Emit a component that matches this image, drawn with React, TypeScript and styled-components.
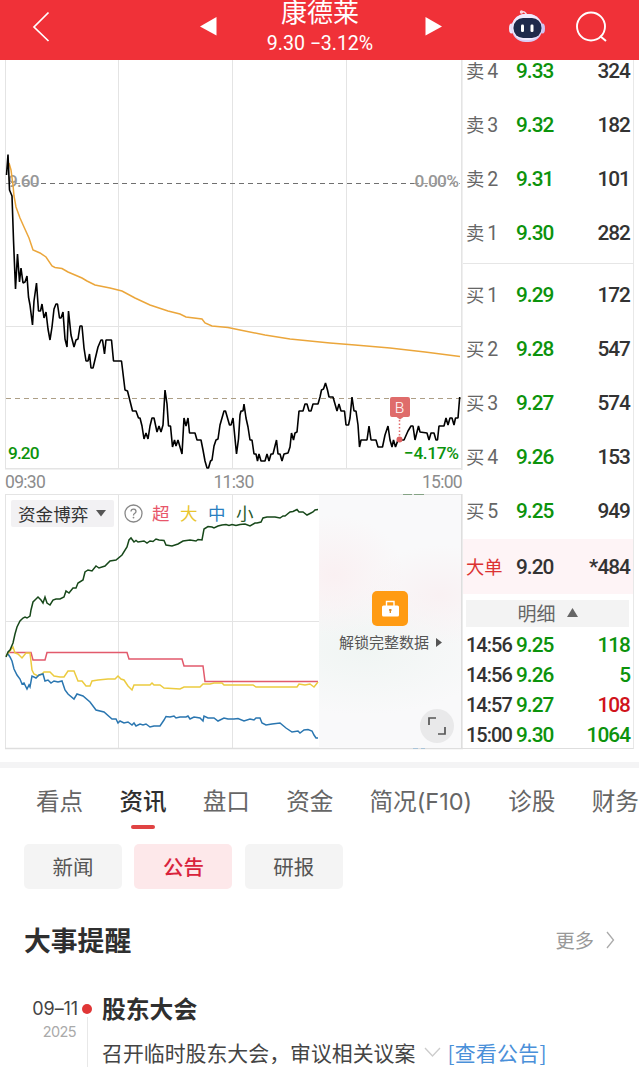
import React from "react";
import styled, { createGlobalStyle } from "styled-components";

const GlobalStyle = createGlobalStyle`
  * { box-sizing: border-box; }
  html, body { margin: 0; padding: 0; background: #fff; }
  body { overflow: hidden; font-family: "Noto Sans CJK SC", sans-serif; color: #333; }
  svg { display: block; }
`;

const GREEN = "#0c930c";
const RED = "#d0131b";
const INK = "#333333";
const digits = `font-family: Roboto, "Noto Sans CJK SC", sans-serif;`;

const Page = styled.div`
  width: 639px;
  height: 1067px;
  overflow: hidden;
  display: flex;
  flex-direction: column;
`;

/* ---------- header ---------- */
const Header = styled.header`
  flex: none;
  height: 60px;
  padding-left: 32px;
  background: #f03138;
  display: flex;
  color: #fff;
`;
const HeaderIcon = styled.svg<{ $left?: number; $top: number }>`
  flex: none;
  margin-left: ${(p) => p.$left ?? 0}px;
  margin-top: ${(p) => p.$top}px;
`;
const TitleBlock = styled.div`
  width: 206px;
  margin-right: 2px;
  display: flex;
  flex-direction: column;
  align-items: center;
`;
const StockName = styled.div`
  height: 22px;
  font-size: 26px;
  line-height: 22px;
`;
const StockQuote = styled.div`
  ${digits}
  margin-top: 10px;
  font-size: 19.6px;
  line-height: 24px;
  letter-spacing: -0.05px;
  white-space: nowrap;
`;

/* ---------- market area ---------- */
const Market = styled.section`
  flex: none;
  height: 690px;
  display: flex;
`;
const ChartColumn = styled.div`
  width: 463px;
  display: flex;
  flex-direction: column;
`;
const TimeAxis = styled.div`
  ${digits}
  height: 24px;
  padding: 0 1px 0 5px;
  display: flex;
  justify-content: space-between;
  font-size: 17.5px;
  line-height: 24px;
  letter-spacing: -0.7px;
  color: #8c8c8c;
`;
const FundChart = styled.div`
  position: relative;
  height: 256px;
`;
const Legend = styled.div`
  position: absolute;
  left: 11px;
  top: 6px;
  height: 27px;
  display: flex;
  align-items: center;
`;
const Picker = styled.div`
  width: 103px;
  height: 27px;
  padding-left: 7px;
  background: #f2f1f3;
  border-radius: 2px;
  display: flex;
  align-items: center;
  gap: 8px;
  font-size: 17.6px;
  line-height: 25px;
  padding-bottom: 1px;
  color: #333;
`;
const HelpIcon = styled.svg`
  margin: 0 9px 0 10px;
`;
const LegendItem = styled.span<{ $color: string }>`
  width: 28px;
  font-size: 17.5px;
  line-height: 25px;
  padding-bottom: 2px;
  color: ${(p) => p.$color};
`;
const LockPanel = styled.div`
  position: absolute;
  left: 319px;
  top: 1px;
  width: 142px;
  height: 253px;
  padding-top: 96px;
  display: flex;
  flex-direction: column;
  align-items: center;
  background:
    radial-gradient(ellipse 70px 60px at 15px 80px, #faf0f2 0%, rgba(250, 240, 242, 0) 100%),
    radial-gradient(ellipse 75px 50px at 120px 100px, #f9f1f3 0%, rgba(249, 241, 243, 0) 100%),
    radial-gradient(ellipse 130px 65px at 45px 155px, #f0f5f3 0%, rgba(240, 245, 243, 0) 100%),
    #f9f9fa;
`;
const LockLabel = styled.div`
  margin-top: 4px;
  padding-left: 1px;
  display: flex;
  align-items: center;
  gap: 7px;
  font-size: 15px;
  line-height: 24px;
  color: #555;
`;
const ExpandButton = styled.div`
  position: absolute;
  right: 7px;
  bottom: 5px;
  width: 34px;
  height: 34px;
  border-radius: 50%;
  background: #e9e9ea;
  display: grid;
  place-items: center;
`;

/* ---------- order book ---------- */
const OrderBook = styled.div`
  width: 171px;
  height: 689px;
  border-right: 1px solid #e8e8e8;
  border-bottom: 1px solid #dedede;
  display: flex;
  flex-direction: column;
`;
const SellSide = styled.div`
  flex: none;
  height: 204px;
  padding-bottom: 3px;
  border-bottom: 1px solid #e6e6e6;
  display: flex;
  flex-direction: column;
  justify-content: flex-end;
`;
const BuySide = styled.div`
  flex: none;
  height: 275px;
  padding-top: 4px;
`;
const BookRow = styled.div<{ $height: number; $tint?: string }>`
  ${digits}
  flex: none;
  height: ${(p) => p.$height}px;
  padding: ${(p) => (p.$tint ? "1px 3px 0" : "0 3px 1px")};
  background: ${(p) => p.$tint ?? "transparent"};
  display: grid;
  grid-template-columns: 50px 50px 1fr;
  align-items: center;
  font-size: 20.8px;
  font-weight: 500;
  line-height: 20px;
  letter-spacing: -0.95px;
`;
const PartialRow = styled(BookRow)`
  height: 37px;
  padding-bottom: 18px;
`;
const Level = styled.span<{ $color?: string }>`
  height: 20px;
  font-size: 18.3px;
  font-weight: 400;
  line-height: 22px;
  letter-spacing: 0;
  color: ${(p) => p.$color ?? "#666"};
`;
const LevelNumber = styled.span`
  margin-left: 3px;
  font-size: 19.5px;
`;
const Clock = styled.span`
  color: ${INK};
  font-size: 20px;
  letter-spacing: -1px;
`;
const Price = styled.span<{ $color: string }>`
  color: ${(p) => p.$color};
`;
const Volume = styled.span<{ $color: string }>`
  text-align: right;
  color: ${(p) => p.$color};
`;
const DetailBar = styled.div`
  flex: none;
  height: 27px;
  margin: 6px 4px 3px 3px;
  background: #f3f3f3;
  display: flex;
  align-items: center;
  justify-content: center;
  gap: 11px;
  font-size: 19px;
  line-height: 25px;
  padding-bottom: 2px;
  color: #666;
`;

/* ---------- news area ---------- */
const Divider = styled.div`
  flex: none;
  height: 6px;
  margin-top: 12px;
  background: #f4f4f5;
`;
const Tabs = styled.nav`
  flex: none;
  height: 76px;
  padding: 14px 0 0 36px;
  display: flex;
  gap: 36.2px;
  width: 700px;
`;
const Tab = styled.div<{ $active?: boolean }>`
  flex: none;
  display: flex;
  flex-direction: column;
  align-items: center;
  font-size: 23.6px;
  line-height: 36px;
  white-space: nowrap;
  font-weight: ${(p) => (p.$active ? 500 : 400)};
  color: ${(p) => (p.$active ? "#2f2f2f" : "#666")};
  &::after {
    content: "";
    width: 24px;
    height: 4px;
    margin-top: 7px;
    border-radius: 2px;
    background: ${(p) => (p.$active ? "#e04343" : "transparent")};
  }
`;
const TabCode = styled.span`
  font-family: Inter, sans-serif;
  font-size: 23.5px;
`;
const TabLabel = styled.div``;
const Chips = styled.div`
  flex: none;
  padding-left: 24px;
  display: flex;
  gap: 12.4px;
`;
const Chip = styled.div<{ $active?: boolean }>`
  width: 98px;
  height: 45px;
  border-radius: 5px;
  text-align: center;
  font-size: 20.5px;
  line-height: 45px;
  font-weight: ${(p) => (p.$active ? 500 : 400)};
  color: ${(p) => (p.$active ? "#d9233c" : "#555")};
  background: ${(p) => (p.$active ? "#fde8ea" : "#f4f4f4")};
`;
const SectionHead = styled.div`
  flex: none;
  height: 40px;
  margin-top: 31px;
  padding: 0 24px 0 24px;
  display: flex;
  align-items: center;
  justify-content: space-between;
`;
const SectionTitle = styled.h2`
  margin: 0;
  font-size: 26.8px;
  line-height: 40px;
  font-weight: 700;
  color: #2f2f2f;
`;
const More = styled.div`
  display: flex;
  align-items: center;
  gap: 12px;
  font-size: 19.3px;
  line-height: 40px;
  color: #999;
`;
const Event = styled.article`
  flex: none;
  height: 76px;
  margin-top: 30px;
  display: grid;
  grid-template-columns: 78px 18px 1fr;
`;
const EventDate = styled.div`
  font-family: Inter, sans-serif;
  padding-top: 7px;
  text-align: right;
  font-size: 18px;
  line-height: 24px;
  letter-spacing: -0.1px;
  color: #444;
`;
const EventYear = styled.div`
  padding-right: 2px;
  font-size: 14.5px;
  line-height: 21px;
  letter-spacing: -0.6px;
  color: #aaa;
`;
const Rail = styled.div`
  padding-top: 14px;
  display: flex;
  flex-direction: column;
  align-items: center;
  &::before {
    content: "";
    width: 10px;
    height: 10px;
    border-radius: 50%;
    background: #e03636;
  }
  &::after {
    content: "";
    width: 1px;
    flex: 1;
    margin-top: 3px;
    background: #e8e8e8;
  }
`;
const EventBody = styled.div`
  padding-left: 6px;
`;
const EventTitle = styled.h3`
  margin: 0;
  font-size: 23.8px;
  line-height: 36px;
  font-weight: 700;
  color: #2f2f2f;
`;
const EventText = styled.p`
  margin: 9px 0 0;
  display: flex;
  align-items: center;
  font-size: 20.9px;
  line-height: 34px;
  white-space: nowrap;
  color: #444;
`;
const FoldIcon = styled.svg`
  margin: 0 6px 0 9px;
`;
const Link = styled.a`
  letter-spacing: 0.3px;
  color: #4a90d9;
`;

const PRICE_LINE =
  "6.5,175 8,154.5 9.5,190 12,196 13.5,240 15.5,289 17.5,254 19.5,282 21,268 23,283 25,282 27,276 28.5,297 30,305 32.5,325 34,301 36.5,283 38.5,311 40.5,311 42,304 44,318 46,312 48,329 50,340 52,327 54,309 56,304 57.5,304 59.5,318 61,318 63,312 65,339 67,347 68.5,311 71,335 74,347 76,340 78,339 80,326 82,326 84,348 86,361 88,361 89.5,354 91,368 93,368 98,347 101,340 102.5,340 104.5,354 106,340 111.5,340 113.5,361 121.5,361 125,390 127.5,391 132.5,411 136,411 138.5,418 140,418 142,426 144,439 146,433 148,439 150,426 152,418 154,418 157,432 159,426 161,432 163,425 165,390 167,404 168.5,426 170.5,426 172.5,447 174.5,440 176,446 178,440 182,454 184,418 186,426 188,418 189.5,433 195,433 197,440 201,440 203,450 205,461 207,468 208.5,468 210.5,461 212,460 214,446 216,440 218,439 220,425 222,418 224,411 225.5,411 227.5,418 229.5,425 231,425 233,418 236.5,454 238.5,439 240,415 241,411 243,411 244,404 246,418 248,427 250,440 252,440 254,454 256,454 257.5,461 259,454 261,461 265,461 267,454 269,461 271,454 273,454 276.5,440 278,454 280,454 282,461 284,454 288,453 290,447 291.5,433 293.5,440 295,433 297,432 299,411 303,411 305,404 307,404 309,411 311,411 313,404 318,404 320,397 321.5,390 323.5,389 325.5,383 327.5,390 329,397 333,397 335,404 337,411 339,404 341,411 344.5,411 346,425 348.5,425 350,418 352,397 354,411 356,411 358,425 359.5,447 361,440 367,440 369,426 371,440 376,440 378,447 382.5,447 385,435 388,426 390,440 392,447 393.5,440 395.5,447 398,440 404,440 408,431 411,426 413,426 415,440 417,432 418.5,426 420,432 427,433 429,440 431,433 434,433 436,440 437.5,440 439,426 444,426 446,418 448,425 450,418 452,418 454,425 455.5,418 458,418 459.7,397";
const AVERAGE_LINE =
  "9,163 11,170 13,185 14,196 16,207 20,218 24,227 29,238 33,250 40,253 46,257 52,266 55,267.5 62,268.5 68,272 82,278 87,281 95,285 110,288 122,291 135,298 150,305 168,311 180,314 186,317 202,319 205,323 212,326 228,327.5 240,330 265,335 290,339 330,343 355,345 390,348 425,352 460,356.5";
const SMALL_LINE =
  "6,657 8,652 10,650 13,643 15,634 17,627 20,621 23,618 25,617 27,618 30,616 31,610 33,602 36,599 38,597 41,600 43,603 45,597 47,603 50,605 53,600 56,599 60,599 64,597 66,591 69,593 73,588 76,588 78,583 83,580 85,572 88,570 92,571 96,566 99,568 105,566 110,561 116,560 122,555 127,547 129,540 131,538 134,542 136,540.5 138,542 144,541 147,543 150,541 153,541.5 156,539 159,540 164,540.5 166,545 172,546 178,544 183,541 190,540 196,541 198,539.5 202,540 204,529 208,526.5 212,527 214,528 218,526 222,525 226,524.5 229,525.5 232,524.5 236,525.5 240,524.5 245,524 250,526 255,523 257,523 261,522 263,518 267,517 275,517 280,518 283,516 285,516 290,512 293,511.5 297,509.5 299,512 303,512 307,515 310,513.5 313,512 315,510 318,509.5";
const SUPER_LINE =
  "8,652.5 31,652.5 33,660 45,660 47,652.5 127,652.5 129,659 182,659 184,666 203,666 205,681.5 318,681.5";
const LARGE_LINE =
  "6,656 13,647 15,653 18,654 22,658 26,653 30,653 32,670 34,674 38,676 42,674 44,672 50,672 54,676 60,677 64,677 68,671 74,671 78,681 82,681 86,686 90,686 92,681 98,680 108,679 115,679 118,676 121,679 124,680 128,686 132,690 134,685 150,685 152,683 154,685 160,685 164,688 180,689 184,687 200,687 203,684 210,684 214,683 222,683 224,685 253,685 256,687 297,687 299,684 305,685 310,684 314,687 318,682";
const MEDIUM_LINE =
  "8,654 10,657 12,661 14,669 17,675 20,679 22,684 24,683 27,689 29,685 30,687 32,676 36,678 39,675 43,674 45,681 48,680 51,683 54,681 58,682 62,681 65,690 68,694 74,699 77,694 80,695 83,696 90,702 96,710 104,712 112,719 116,719 118,723 120,721 124,723 128,722 132,725 134,723 136,726 140,724 143,725 146,724 150,727 154,726 160,726 164,720 166,716.5 170,717 174,716 176,718 180,717 186,717 188,716 190,719 194,717 200,718 203,721 204,716 208,718 214,718 218,721 224,718 228,719 234,719 238,718.5 244,721 250,719 254,720 256,718 260,718 262,723 266,725 272,724 280,723 286,728 292,732 298,731 300,733 304,730 308,729.5 312,731 314,735 316,738 318,738";

const PriceChart = () => (
  <svg width="463" height="410" viewBox="0 60 463 410">
    <g stroke="#e4e4e4" strokeWidth="1">
      <path d="M5.5 60V469M118.5 60V469M232.5 60V469M346.5 60V469M5 326.5H461" />
      <path d="M461.8 60V470M5 468.8H462" strokeWidth="1.6" />
    </g>
    <path d="M41 183.5H414" stroke="#707070" strokeDasharray="5 4" />
    <path d="M6 183.5H41M414 183.5H460" stroke="#a0a0a0" strokeDasharray="5 4" />
    <path d="M6 398.5H461" stroke="#ad9f86" strokeDasharray="5 4" />
    <g fontFamily="Roboto, sans-serif" fontSize="17.3">
      <text x="8" y="187" textLength="31.5" fontWeight="500" fill="#979797">9.60</text>
      <text x="414.5" y="187" textLength="44.5" fontWeight="500" fill="#979797">0.00%</text>
      <text x="8" y="459" textLength="31.5" fontWeight="500" fill={GREEN}>9.20</text>
      <text x="404" y="459" textLength="55" fontWeight="500" fill={GREEN}>−4.17%</text>
    </g>
    <polyline points={AVERAGE_LINE} fill="none" stroke="#eba63b" strokeWidth="1.5" />
    <polyline points={PRICE_LINE} fill="none" stroke="#000" strokeWidth="1.6" strokeLinejoin="bevel" />
    <path d="M399.5 420V437" stroke="#e06a6a" strokeWidth="1.5" strokeDasharray="1.5 2" />
    <circle cx="399.5" cy="439.5" r="3" fill="#dc6060" />
    <path d="M392 397H408a2 2 0 0 1 2 2V415a2 2 0 0 1-2 2H403.500L400 419.500L396.500 417H392a2 2 0 0 1-2-2V399a2 2 0 0 1 2-2Z" fill="#df6c6b" />
    <text x="399.500" y="412.500" textAnchor="middle" fontFamily="Roboto, sans-serif" fontSize="15.5" fontWeight="300" fill="#fff">B</text>
  </svg>
);

const FundLines = () => (
  <svg width="463" height="256" viewBox="0 494 463 256">
    <g stroke="#e4e4e4" strokeWidth="1">
      <path d="M5.500 494V749M118.500 494V749M232.500 494V749M5 494.500H462M5 621.500H461" />
      <path d="M461.800 494V749M5 748.500H463" strokeWidth="1.6" stroke="#dedede" />
    </g>
    <path d="M403 494.700H412M414 494.700H424" stroke="#6f946f" />
    <path d="M413 748.300H418M421 748.300H425" stroke="#9dbdd6" />
    <g fill="none" strokeWidth="1.5">
      <polyline points={SUPER_LINE} stroke="#e25a6c" />
      <polyline points={LARGE_LINE} stroke="#eccb3f" />
      <polyline points={MEDIUM_LINE} stroke="#2a76b0" />
      <polyline points={SMALL_LINE} stroke="#17481a" />
    </g>
  </svg>
);

const Robot = () => (
  <HeaderIcon $left={66} $top={8} width="38" height="36" viewBox="508 8 38 36">
    <path d="M521 12.500Q525 10 527 16" fill="none" stroke="#f4dcec" strokeWidth="1.6" strokeLinecap="round" />
    <circle cx="521.500" cy="12" r="1.700" fill="#fbd5dc" />
    <ellipse cx="511.500" cy="28.500" rx="2.500" ry="5" fill="#eee6fb" />
    <ellipse cx="542.500" cy="28.500" rx="2.500" ry="5" fill="#cfc4f2" />
    <rect x="511.500" y="14" width="31" height="28" rx="14" fill="#d9cef6" />
    <rect x="512" y="14" width="29.500" height="26" rx="13" fill="#f0ebfd" />
    <rect x="513.500" y="18" width="28" height="20" rx="9.500" fill="#1f2a4b" />
    <rect x="521" y="24.500" width="3" height="7.500" rx="1.200" fill="#fff" />
    <rect x="530.500" y="24.500" width="3" height="7.500" rx="1.200" fill="#fff" />
  </HeaderIcon>
);

const sells = [["4", "9.33", "324"], ["3", "9.32", "182"], ["2", "9.31", "101"], ["1", "9.30", "282"]];
const buys = [["1", "9.29", "172"], ["2", "9.28", "547"], ["3", "9.27", "574"], ["4", "9.26", "153"], ["5", "9.25", "949"]];
const ticks = [
  ["14:56", "9.25", "118", GREEN],
  ["14:56", "9.26", "5", GREEN],
  ["14:57", "9.27", "108", RED],
  ["15:00", "9.30", "1064", GREEN],
];
const legend = [["超", "#e8566a"], ["大", "#e9c52f"], ["中", "#2a7fc0"], ["小", "#2a5a2a"]];

const QuoteRow = ({ side, row, partial }: { side: string; row: string[]; partial?: boolean }) => {
  const Row = partial ? PartialRow : BookRow;
  return (
    <Row $height={54}>
      <Level>{side}<LevelNumber>{row[0]}</LevelNumber></Level>
      <Price $color={GREEN}>{row[1]}</Price>
      <Volume $color={INK}>{row[2]}</Volume>
    </Row>
  );
};

export default function App() {
  return (
    <Page>
      <GlobalStyle />
      <Header>
        <HeaderIcon $top={11} width="18" height="32" viewBox="0 0 18 32">
          <path d="M16.500 1.500L2 16L16.500 30" fill="none" stroke="#fff" strokeWidth="1.700" />
        </HeaderIcon>
        <HeaderIcon $left={150} $top={17} width="17" height="19" viewBox="0 0 17 19">
          <path d="M0 9.500L16.500 0V18.500Z" fill="#fff" />
        </HeaderIcon>
        <TitleBlock>
          <StockName>康德莱</StockName>
          <StockQuote>9.30 −3.12%</StockQuote>
        </TitleBlock>
        <HeaderIcon $top={17} width="17" height="19" viewBox="0 0 17 19">
          <path d="M17 9.500L0.500 0V18.500Z" fill="#fff" />
        </HeaderIcon>
        <Robot />
        <HeaderIcon $left={29} $top={11} width="33" height="32" viewBox="575 11 33 32">
          <circle cx="591" cy="26.500" r="14" fill="none" stroke="#fff" strokeWidth="1.900" />
          <path d="M600 36L606 41" stroke="#fff" strokeWidth="2" />
        </HeaderIcon>
      </Header>

      <Market>
        <ChartColumn>
          <PriceChart />
          <TimeAxis>
            <span>09:30</span>
            <span>11:30</span>
            <span>15:00</span>
          </TimeAxis>
          <FundChart>
            <FundLines />
            <Legend>
              <Picker>
                资金博弈
                <svg width="10" height="7" viewBox="0 0 10 7"><path d="M0 0H10L5 6.500Z" fill="#555" /></svg>
              </Picker>
              <HelpIcon width="19" height="19" viewBox="0 0 19 19">
                <circle cx="9.500" cy="9.500" r="8.500" fill="none" stroke="#888" strokeWidth="1.300" />
                <path d="M7 7.600Q7 5.200 9.500 5.200T12 7.500Q12 8.700 10.500 9.500Q9.500 10.100 9.500 11.500" fill="none" stroke="#888" strokeWidth="1.300" />
                <circle cx="9.500" cy="13.600" r="0.900" fill="#888" />
              </HelpIcon>
              {legend.map(([name, color]) => (
                <LegendItem key={name} $color={color}>{name}</LegendItem>
              ))}
            </Legend>
            <LockPanel>
              <svg width="36" height="35" viewBox="0 0 36 35">
                <rect width="36" height="35" rx="5" fill="#ff9b12" />
                <rect x="10" y="14.500" width="17" height="11" rx="1.500" fill="#fff" />
                <path d="M14.500 15V10.500H22V15" fill="none" stroke="#fff" strokeWidth="1.400" />
                <path d="M18.300 18V22M17 19H19.600" stroke="#d98a20" strokeWidth="1.300" />
              </svg>
              <LockLabel>
                解锁完整数据
                <svg width="6" height="9" viewBox="0 0 6 9"><path d="M0 0L6 4.500L0 9Z" fill="#555" /></svg>
              </LockLabel>
              <ExpandButton>
                <svg width="18" height="18" viewBox="0 0 18 18">
                  <path d="M1 8V1H8M17 10V17H10" fill="none" stroke="#555" strokeWidth="1.700" />
                </svg>
              </ExpandButton>
            </LockPanel>
          </FundChart>
        </ChartColumn>

        <OrderBook>
          <SellSide>
            {sells.map((r, i) => <QuoteRow key={r[0]} side="卖" row={r} partial={i === 0} />)}
          </SellSide>
          <BuySide>
            {buys.map((r) => <QuoteRow key={r[0]} side="买" row={r} />)}
          </BuySide>
          <BookRow $height={55} $tint="#fef4f6">
            <Level $color="#dc3232">大单</Level>
            <Price $color={INK}>9.20</Price>
            <Volume $color={INK}>*484</Volume>
          </BookRow>
          <DetailBar>
            明细
            <svg width="11" height="9" viewBox="0 0 11 9"><path d="M0 9L5.500 0L11 9Z" fill="#666" /></svg>
          </DetailBar>
          {ticks.map(([time, price, volume, color], i) => (
            <BookRow key={i} $height={30}>
              <Clock>{time}</Clock>
              <Price $color={GREEN}>{price}</Price>
              <Volume $color={color}>{volume}</Volume>
            </BookRow>
          ))}
        </OrderBook>
      </Market>

      <Divider />
      <Tabs>
        <Tab>看点</Tab>
        <Tab $active>资讯</Tab>
        <Tab>盘口</Tab>
        <Tab>资金</Tab>
        <Tab><TabLabel>简况<TabCode>(F10)</TabCode></TabLabel></Tab>
        <Tab>诊股</Tab>
        <Tab>财务</Tab>
      </Tabs>
      <Chips>
        <Chip>新闻</Chip>
        <Chip $active>公告</Chip>
        <Chip>研报</Chip>
      </Chips>
      <SectionHead>
        <SectionTitle>大事提醒</SectionTitle>
        <More>
          更多
          <svg width="9" height="18" viewBox="0 0 9 18"><path d="M1 1L7.500 9L1 17" fill="none" stroke="#aaa" strokeWidth="1.300" /></svg>
        </More>
      </SectionHead>
      <Event>
        <EventDate>
          09–11
          <EventYear>2025</EventYear>
        </EventDate>
        <Rail />
        <EventBody>
          <EventTitle>股东大会</EventTitle>
          <EventText>
            召开临时股东大会，审议相关议案
            <FoldIcon width="17" height="10" viewBox="0 0 17 10"><path d="M1 1L8.500 9L16 1" fill="none" stroke="#ccc" strokeWidth="1.300" /></FoldIcon>
            <Link>[查看公告]</Link>
          </EventText>
        </EventBody>
      </Event>
    </Page>
  );
}
